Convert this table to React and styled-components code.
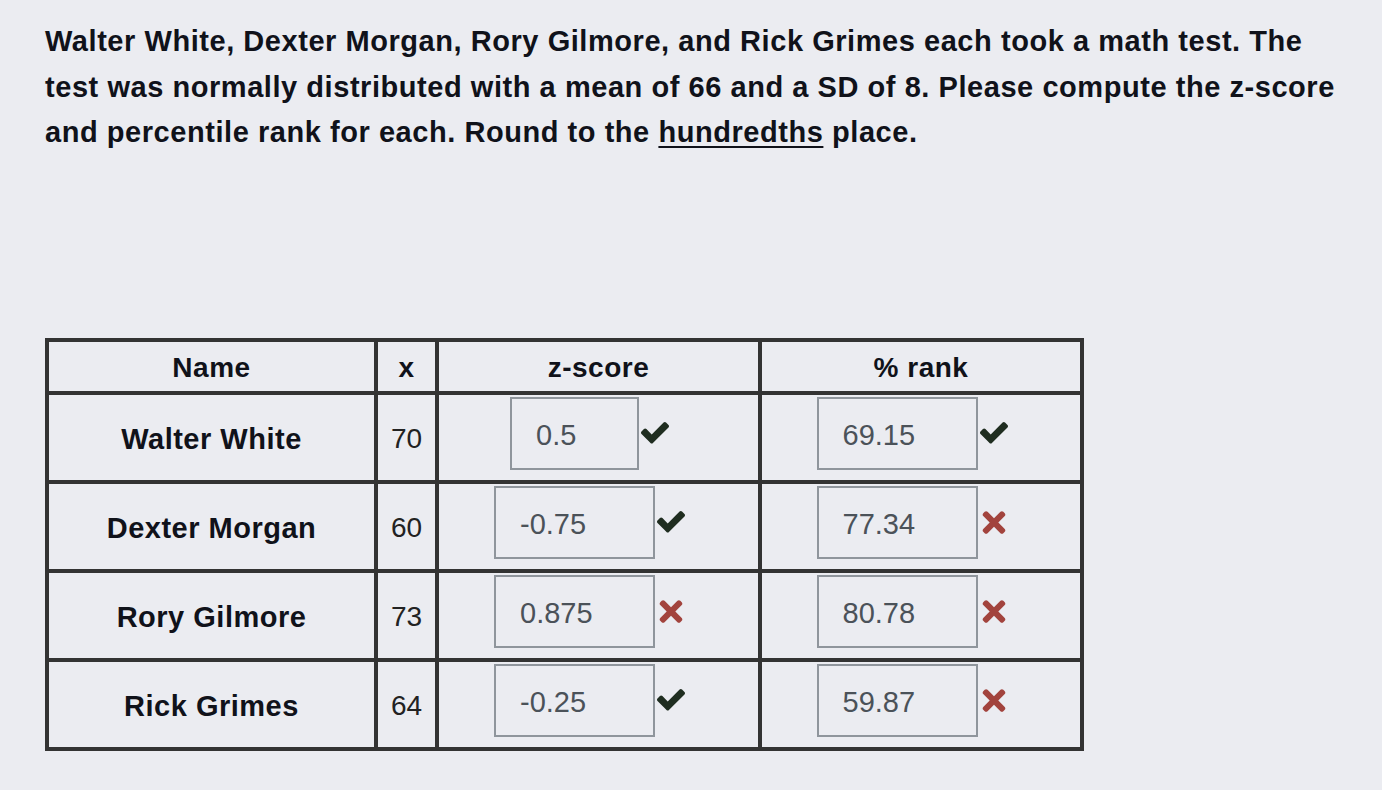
import React from "react";
import styled, { createGlobalStyle } from "styled-components";
import { FaTimes } from "react-icons/fa";

const GlobalStyle = createGlobalStyle`
  body {
    margin: 0;
    background: #ebecf1;
    font-family: "Liberation Sans", Arial, sans-serif;
  }
`;

const Page = styled.div`
  min-height: 790px;
  box-sizing: border-box;
  padding: 19px 45px 0;
`;

const Prompt = styled.p`
  margin: 0;
  font-size: 29px;
  font-weight: 700;
  letter-spacing: 0.55px;
  line-height: 45.5px;
  color: #10121a;
  white-space: nowrap;
`;

const Underlined = styled.span`
  text-decoration: underline;
  text-decoration-thickness: 2px;
  text-underline-offset: 4px;
`;

const Table = styled.table`
  margin-top: 182px;
  table-layout: fixed;
  border-collapse: separate;
  border-spacing: 0;
  border-top: 4px solid #333;
  border-left: 4px solid #333;
  color: #10121a;
`;

const Cell = styled.td`
  width: ${(p) => p.$w}px;
  padding: 0;
  border-right: 4px solid #333;
  border-bottom: 4px solid #333;
`;

const Head = styled.div`
  height: 49px;
  box-sizing: border-box;
  padding-top: 3px;
  display: flex;
  align-items: center;
  justify-content: center;
  font-size: 28px;
  font-weight: 700;
  letter-spacing: 0.5px;
`;

const NameBody = styled.div`
  height: 85px;
  box-sizing: border-box;
  padding-top: 4px;
  display: flex;
  align-items: center;
  justify-content: center;
  font-size: ${(p) => (p.$bold ? 29 : 28)}px;
  font-weight: ${(p) => (p.$bold ? 700 : 400)};
  letter-spacing: ${(p) => (p.$bold ? 0.5 : 0)}px;
  color: ${(p) => (p.$bold ? "#10121a" : "#222")};
`;

const AnswerBody = styled.div`
  height: 85px;
  box-sizing: border-box;
  display: flex;
  align-items: flex-start;
  justify-content: center;
  padding: 2px 18px 0 0;
`;

const Field = styled.input`
  box-sizing: border-box;
  width: ${(p) => p.$w}px;
  height: 73px;
  margin: 0;
  padding: 4px 0 0 24px;
  border: 2px solid #8f959c;
  border-radius: 0;
  background: transparent;
  font-family: "Liberation Sans", Arial, sans-serif;
  font-size: 29px;
  color: #4b5259;
  outline: none;
`;

const Mark = styled.span`
  width: 28px;
  height: 73px;
  margin-left: 2px;
  display: flex;
  align-items: center;
  justify-content: center;
  color: ${(p) => (p.$ok ? "#1f2d20" : "#a2433d")};
`;

const CheckIcon = () => (
  <svg width="28" height="22" viewBox="121 362 1550 1160" fill="currentColor">
    <path d="M1671 566q0 40-28 68l-724 724-136 136q-28 28-68 28t-68-28l-136-136-362-362q-28-28-28-68t28-68l136-136q28-28 68-28t68 28l294 295 656-657q28-28 68-28t68 28l136 136q28 28 28 68z" />
  </svg>
);

const rows = [
  { name: "Walter White", x: 70, z: "0.5", zw: 129, zOk: true, p: "69.15", pOk: true },
  { name: "Dexter Morgan", x: 60, z: "-0.75", zw: 161, zOk: true, p: "77.34", pOk: false },
  { name: "Rory Gilmore", x: 73, z: "0.875", zw: 161, zOk: false, p: "80.78", pOk: false },
  { name: "Rick Grimes", x: 64, z: "-0.25", zw: 161, zOk: true, p: "59.87", pOk: false },
];

const Answer = ({ value, width, ok }) => (
  <AnswerBody>
    <Field $w={width} value={value} readOnly />
    <Mark $ok={ok}>{ok ? <CheckIcon /> : <FaTimes size={33} />}</Mark>
  </AnswerBody>
);

const App = () => (
  <Page>
    <GlobalStyle />
    <Prompt>
      Walter White, Dexter Morgan, Rory Gilmore, and Rick Grimes each took a math test. The
      <br />
      test was normally distributed with a mean of 66 and a SD of 8. Please compute the z-score
      <br />
      and percentile rank for each. Round to the <Underlined>hundredths</Underlined> place.
    </Prompt>
    <Table>
      <tbody>
        <tr>
          <Cell as="th" $w={325}>
            <Head>Name</Head>
          </Cell>
          <Cell as="th" $w={57}>
            <Head>x</Head>
          </Cell>
          <Cell as="th" $w={319}>
            <Head>z-score</Head>
          </Cell>
          <Cell as="th" $w={318}>
            <Head>% rank</Head>
          </Cell>
        </tr>
        {rows.map((r) => (
          <tr key={r.name}>
            <Cell $w={325}>
              <NameBody $bold>{r.name}</NameBody>
            </Cell>
            <Cell $w={57}>
              <NameBody>{r.x}</NameBody>
            </Cell>
            <Cell $w={319}>
              <Answer value={r.z} width={r.zw} ok={r.zOk} />
            </Cell>
            <Cell $w={318}>
              <Answer value={r.p} width={161} ok={r.pOk} />
            </Cell>
          </tr>
        ))}
      </tbody>
    </Table>
  </Page>
);

export default App;
